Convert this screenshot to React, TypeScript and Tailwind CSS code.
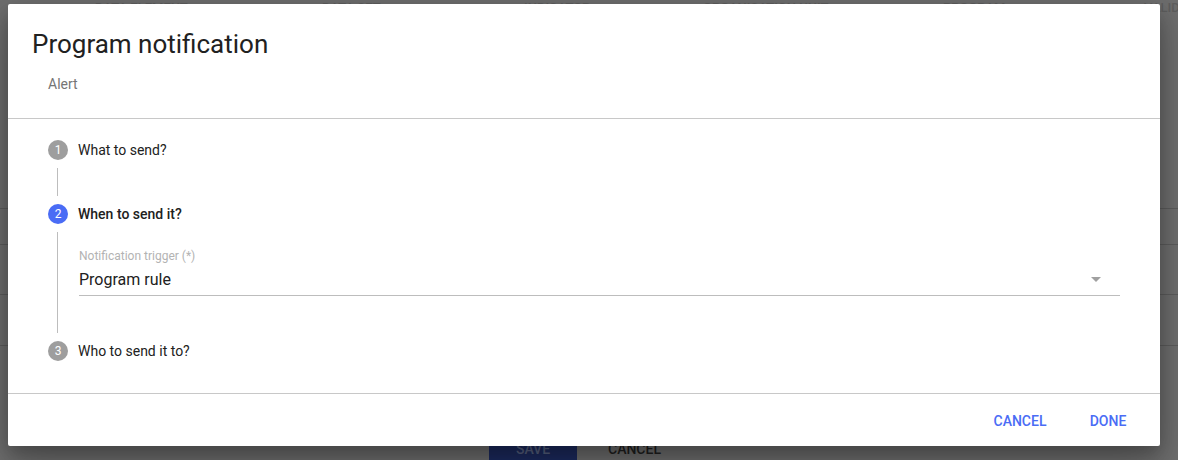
import React from "react";

const headers = [
  { label: "Data element", w: "w-[227px]" },
  { label: "Data set", w: "w-[202px]" },
  { label: "Indicator", w: "w-[179px]" },
  { label: "Organisation unit", w: "w-[240px]" },
  { label: "Program", w: "w-[201px]" },
  { label: "Valid", w: "w-[40px]" },
];

const StepIcon = ({ n, active }: { n: number; active?: boolean }) => (
  <span
    className={`flex h-[20px] w-[20px] shrink-0 items-center justify-center rounded-full text-[12px] leading-none text-white ${
      active ? "bg-[#4a6cf5]" : "bg-[#9e9e9e]"
    }`}
  >
    {n}
  </span>
);

const StepLabel = ({ n, label, active }: { n: number; label: string; active?: boolean }) => (
  <div className="flex h-[36px] items-center gap-[10px]">
    <StepIcon n={n} active={active} />
    <span className={`text-[14px] text-[#212121] ${active ? "font-medium" : ""}`}>{label}</span>
  </div>
);

const App = () => {
  return (
    <div
      className="relative h-[460px] w-[1178px] overflow-hidden bg-[#6e6e6e]"
      style={{ fontFamily: "Roboto, 'Liberation Sans', sans-serif" }}
    >
      {/* page behind the dialog (already dimmed) */}
      <div className="flex flex-col">
        <div className="flex h-[208px] pl-[95px]">
          {headers.map((h) => (
            <span
              key={h.label}
              className={`${h.w} shrink-0 pt-[1px] text-[13px] font-medium uppercase leading-[13px] text-[#5e5e5e]`}
            >
              {h.label}
            </span>
          ))}
        </div>
        <div className="h-[36px] border-t border-[#5c5c5c]" />
        <div className="h-[50px] border-t border-[#5c5c5c]" />
        <div className="h-[51px] border-t border-[#5c5c5c]" />
        <div className="h-[86px] border-t border-[#5c5c5c]" />
        <div className="flex items-center gap-[31px] pl-[489px]">
          <span className="flex h-[36px] w-[88px] items-center justify-center rounded-[2px] bg-[#1c2a5e] text-[14px] font-medium text-[#56607f]">
            SAVE
          </span>
          <span className="text-[14px] font-medium text-[#1f1f1f]">CANCEL</span>
        </div>
      </div>

      {/* dialog */}
      <div className="absolute left-[8px] top-[4px] flex h-[442px] w-[1152px] flex-col rounded-[2px] bg-white shadow-[0_14px_45px_rgba(0,0,0,0.25),0_10px_18px_rgba(0,0,0,0.22)]">
        <div className="border-b border-[#c8c8c8] pb-[24px] pl-[24px] pt-[24px]">
          <h2 className="text-[26px] font-normal leading-[32px] text-[#212121]">Program notification</h2>
          <div className="mt-[14px] pl-[16px] text-[14px] leading-[20px] text-[#757575]">Alert</div>
        </div>

        <div className="flex-1 px-[40px] pt-[13px]">
          <StepLabel n={1} label="What to send?" />
          <div className="ml-[9px] h-[28px] border-l border-[#bdbdbd]" />
          <StepLabel n={2} label="When to send it?" active />
          <div className="ml-[9px] border-l border-[#bdbdbd] pb-[37px] pl-[21px] pt-[16px]">
            <div className="relative border-b border-[#bdbdbd] pb-[3px]">
              <div className="text-[12px] leading-[16px] text-[#b3b3b3]">Notification trigger (*)</div>
              <div className="mt-[4px] text-[16px] leading-[24px] text-[#212121]">Program rule</div>
              <svg
                viewBox="0 0 24 24"
                className="absolute right-[12px] top-[19px] h-[24px] w-[24px] fill-[#a0a0a0]"
              >
                <path d="M7 10l5 5 5-5z" />
              </svg>
            </div>
          </div>
          <StepLabel n={3} label="Who to send it to?" />
        </div>

        <div className="flex justify-end border-t border-[#c8c8c8] px-[8px] pb-[7px] pt-[9px]">
          <button className="h-[36px] min-w-[88px] px-[16px] text-[14px] font-medium uppercase text-[#4a6cf5]">
            Cancel
          </button>
          <button className="h-[36px] min-w-[88px] px-[16px] text-[14px] font-medium uppercase text-[#4a6cf5]">
            Done
          </button>
        </div>
      </div>
    </div>
  );
};

export default App;
